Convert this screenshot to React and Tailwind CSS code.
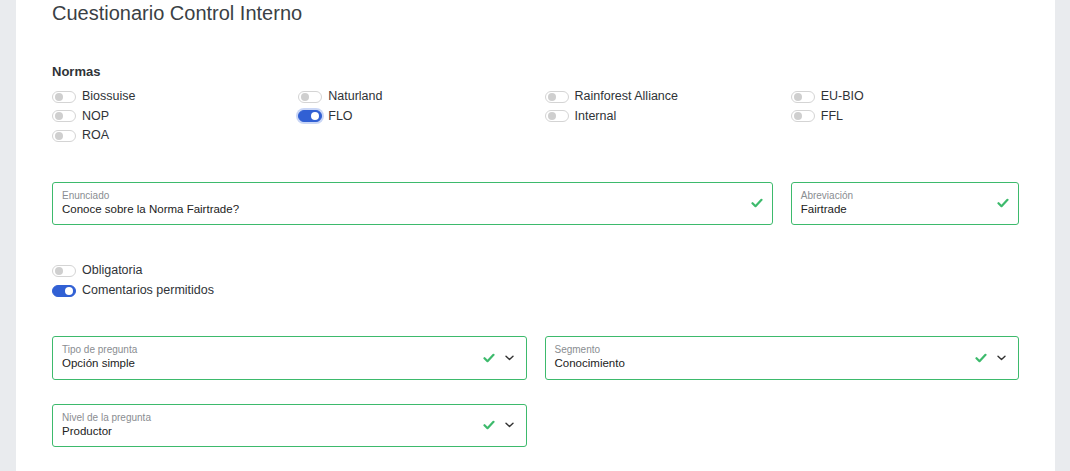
import { useState } from "react";

const normas = [
  { name: "Biossuise", on: false },
  { name: "Naturland", on: false },
  { name: "Rainforest Alliance", on: false },
  { name: "EU-BIO", on: false },
  { name: "NOP", on: false },
  { name: "FLO", on: true, focus: true },
  { name: "Internal", on: false },
  { name: "FFL", on: false },
  { name: "ROA", on: false },
];

function Toggle({ on, focus }) {
  return (
    <span
      className={`relative inline-flex w-[24px] h-[12px] rounded-full shrink-0 border ${
        on ? "bg-[#3160d4] border-[#3160d4]" : "bg-white border-[#d4d4d4]"
      } ${focus ? "ring-2 ring-[#c9d6f6]" : ""}`}
    >
      <span
        className={`absolute top-[1px] w-[8px] h-[8px] rounded-full ${
          on ? "right-[2px] bg-white" : "left-[2px] bg-[#cfcfcf]"
        }`}
      />
    </span>
  );
}

function SwitchRow({ label, on, focus, leading }) {
  return (
    <div className={`flex items-center gap-[6px] ${leading}`}>
      <Toggle on={on} focus={focus} />
      <span className="text-[12.5px] text-[#2f3337]">{label}</span>
    </div>
  );
}

function Check() {
  return (
    <svg width="12" height="10" viewBox="0 0 12 10" fill="none">
      <path d="M1.5 5.2 L4.5 8.2 L10.5 1.8" stroke="#3dba6c" strokeWidth="2.2" strokeLinecap="round" strokeLinejoin="round" />
    </svg>
  );
}

function Chevron() {
  return (
    <svg width="9" height="6" viewBox="0 0 9 6" fill="none">
      <path d="M1 1.2 L4.5 4.6 L8 1.2" stroke="#333" strokeWidth="1.4" strokeLinecap="round" strokeLinejoin="round" />
    </svg>
  );
}

function Field({ label, value, select, className = "" }) {
  return (
    <div className={`flex items-center border border-[#3dba6c] rounded-[3px] pl-[9px] pr-[9px] ${className}`}>
      <div className="flex-1 flex flex-col">
        <span className="text-[10px] leading-[12px] text-[#8a8d91]">{label}</span>
        <span className="text-[11.5px] leading-[15px] text-[#222]">{value}</span>
      </div>
      <Check />
      {select && (
        <span className="ml-[10px] mr-[3px] flex items-center">
          <Chevron />
        </span>
      )}
    </div>
  );
}

export default function App() {
  const [extra] = useState([
    { name: "Obligatoria", on: false },
    { name: "Comentarios permitidos", on: true },
  ]);

  return (
    <div
      className="h-[471px] overflow-hidden bg-[#e9ebee] pl-4 pr-[15px]"
      style={{ fontFamily: "'Liberation Sans', Arial, sans-serif" }}
    >
      <div className="bg-white h-full px-9">
        {/* TITLE */}
        <h1 className="text-[20px] leading-[26px] text-[#3a3f45]">
          Cuestionario Control Interno
        </h1>

        {/* NORMAS */}
        <p className="mt-[37px] text-[13px] leading-[18px] font-bold text-[#2f3337]">
          Normas
        </p>
        <div className="mt-[6px] grid grid-cols-4 gap-x-[18px]">
          {normas.map((n) => (
            <SwitchRow key={n.name} label={n.name} on={n.on} focus={n.focus} leading="h-[19.5px]" />
          ))}
        </div>

        {/* ENUNCIADO */}
        <div className="mt-[36px] grid grid-cols-4 gap-x-[18px]">
          <Field
            className="col-span-3 h-[43px]"
            label="Enunciado"
            value="Conoce sobre la Norma Fairtrade?"
          />
          <Field className="h-[43px]" label="Abreviación" value="Fairtrade" />
        </div>

        {/* OPCIONES */}
        <div className="mt-[36px]">
          {extra.map((n) => (
            <SwitchRow key={n.name} label={n.name} on={n.on} leading="h-[20px]" />
          ))}
        </div>

        {/* SELECTS */}
        <div className="mt-[35px] grid grid-cols-2 gap-x-[18px] gap-y-6">
          <Field className="h-[44px]" label="Tipo de pregunta" value="Opción simple" select />
          <Field className="h-[44px]" label="Segmento" value="Conocimiento" select />
          <Field className="h-[43px]" label="Nivel de la pregunta" value="Productor" select />
        </div>
      </div>
    </div>
  );
}
